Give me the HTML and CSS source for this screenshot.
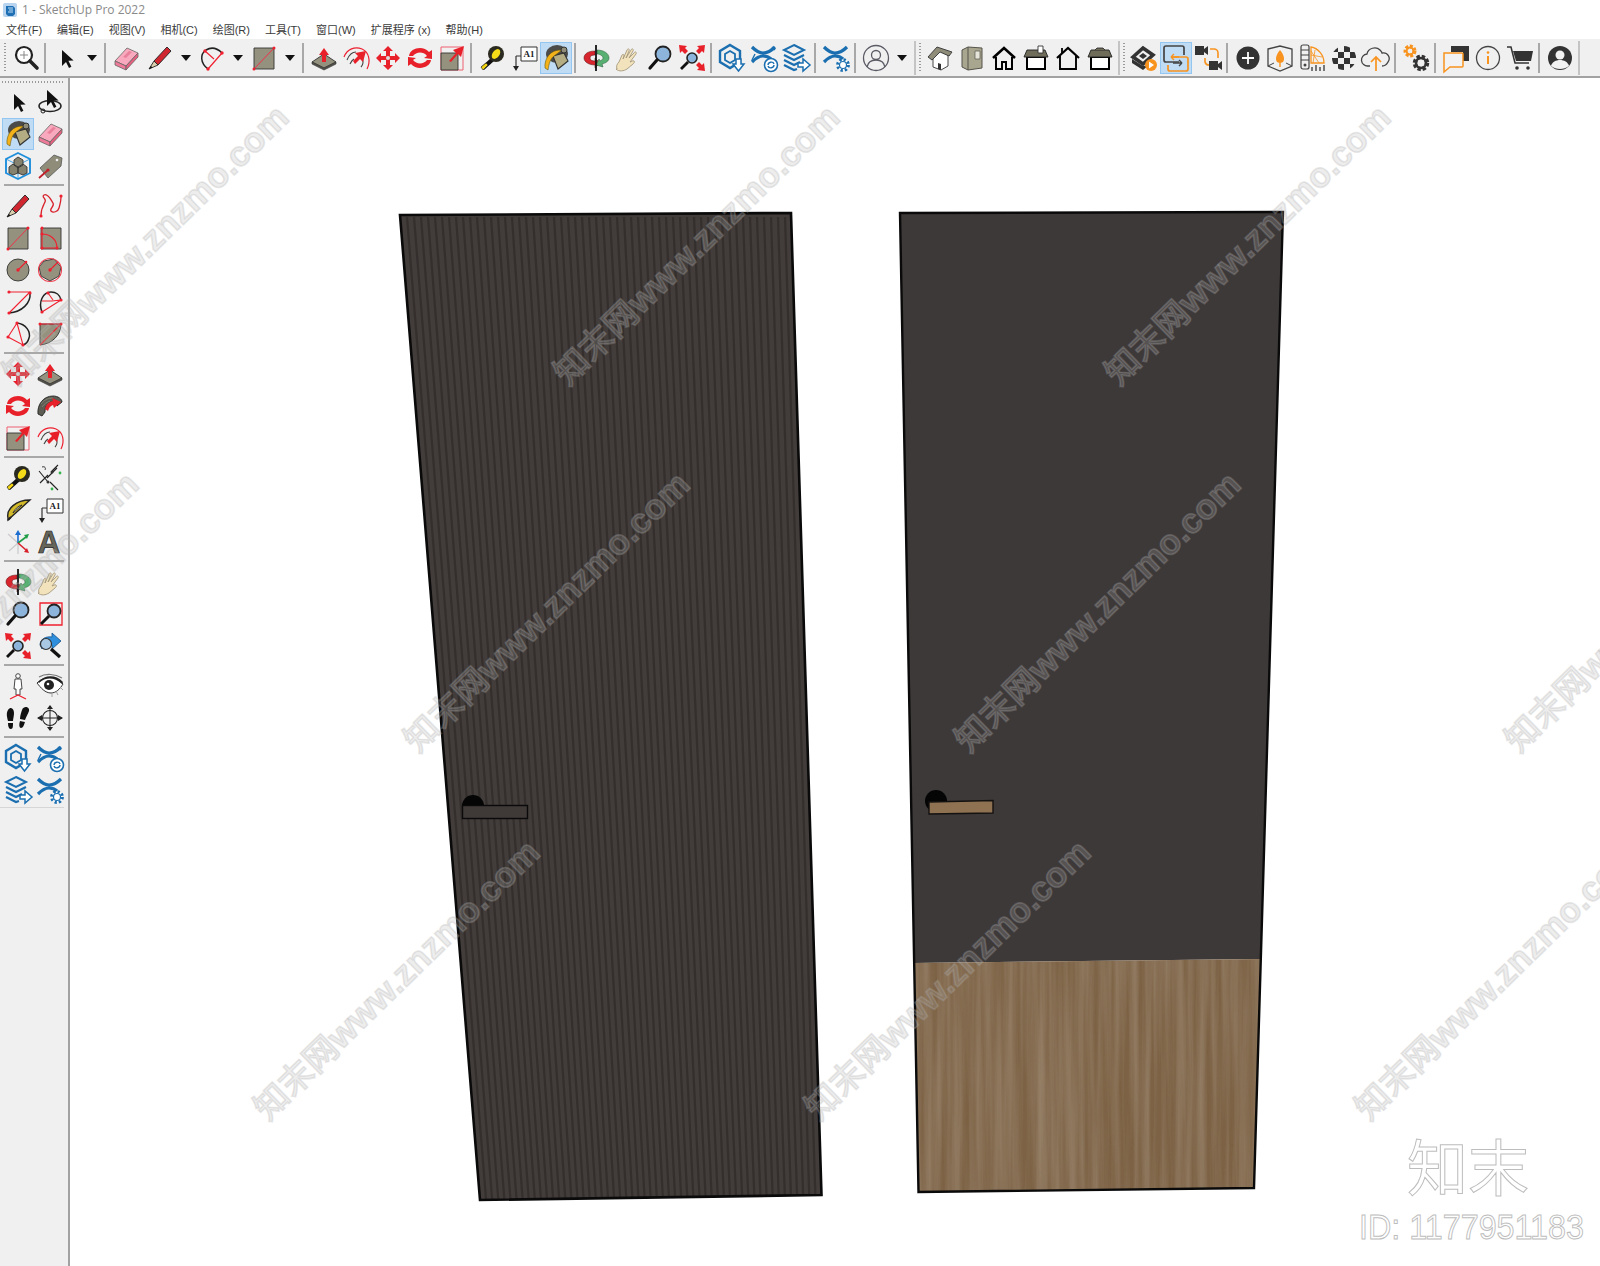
FILE: index.html
```html
<!DOCTYPE html>
<html lang="zh">
<head>
<meta charset="utf-8">
<title>1 - SketchUp Pro 2022</title>
<link rel="stylesheet" href="styles.css">
</head>
<body>
<svg class="sprite" aria-hidden="true">
<defs>
<symbol id="search" viewBox="0 0 32 32"><circle cx="14" cy="13" r="8" fill="#fff" stroke="#222" stroke-width="2.200"/><path d="M20 19l7 7" stroke="#222" stroke-width="3.600" stroke-linecap="round"/><path d="M14 9v8M10 13h8" stroke="#888"/></symbol>
<symbol id="select" viewBox="0 0 32 32"><path d="M12 8v16l4-4 3 6 2.400-1.200-3-6 5.200-.3z" fill="#111"/></symbol>
<symbol id="orbsel" viewBox="0 0 32 32"><ellipse cx="16" cy="20" rx="11" ry="5.500" fill="none" stroke="#222" stroke-width="1.500"/><circle cx="9" cy="25" r="2" fill="none" stroke="#222"/><path d="M13 4v16l4-4 3 6 2.400-1.200-3-6 5.200-.3z" fill="#111"/></symbol>
<symbol id="eraser" viewBox="0 0 32 32"><path d="M5 19L17 6l11 5-12 13z" fill="#f9a9bd" stroke="#666" stroke-width=".8"/><path d="M5 19l11 5v4L5 23z" fill="#ee7a98" stroke="#666" stroke-width=".8"/><path d="M16 24l12-13v4L16 28z" fill="#e5607f" stroke="#666" stroke-width=".8"/><path d="M13 15l6-6 3 1-6 6z" fill="#e8819b"/></symbol>
<symbol id="pencil" viewBox="0 0 32 32"><path d="M10 19L23 5l4 4-13 14z" fill="#cf2630" stroke="#222" stroke-width=".9"/><path d="M5 27l5-8 4 4z" fill="#d9cfae" stroke="#222" stroke-width=".9"/><path d="M5 27l2-3 1.500 1.500z" fill="#111"/></symbol>
<symbol id="arc3" viewBox="0 0 32 32"><path d="M12 27C4 21 4 12 10 8c5-3 11-2 16 3" fill="none" stroke="#222" stroke-width="1.500"/><path d="M9 9l9 8M26 11L12 27" stroke="#f02030" stroke-width="1.200" fill="none"/><g fill="#f02030"><circle cx="9" cy="9" r="1.700"/><circle cx="26" cy="11" r="1.700"/><circle cx="12" cy="27" r="1.700"/></g></symbol>
<symbol id="rect" viewBox="0 0 32 32"><path d="M6 6h20v21H6z" fill="#94927e" stroke="#333" stroke-width=".9"/><path d="M6 27L26 6" stroke="#f0304a" stroke-width="1"/><circle cx="6" cy="27" r="1.500" fill="#f02030"/><circle cx="26" cy="6" r="1.500" fill="#f02030"/></symbol>
<symbol id="rrect" viewBox="0 0 32 32"><path d="M7 6h20v21H7z" fill="#94927e" stroke="#333" stroke-width=".9"/><path d="M8 12c9 0 15 6 15 14M8 6v20h15" fill="none" stroke="#f02030" stroke-width="1.100"/><g fill="#f02030"><circle cx="8" cy="6" r="1.500"/><circle cx="8" cy="12" r="1.500"/><circle cx="8" cy="26" r="1.500"/><circle cx="23" cy="26" r="1.500"/></g></symbol>
<symbol id="circle" viewBox="0 0 32 32"><circle cx="16" cy="16" r="11" fill="#94927e" stroke="#333" stroke-width=".9"/><path d="M16 16l8-8" stroke="#f02030" stroke-width="1.100"/><circle cx="16" cy="16" r="1.700" fill="#f02030"/><circle cx="24" cy="8" r="1.300" fill="#f02030"/></symbol>
<symbol id="poly" viewBox="0 0 32 32"><path d="M10 7l10-2 7 8-2 9-9 5-9-5-2-9z" fill="#94927e" stroke="#333" stroke-width=".9"/><circle cx="16" cy="16" r="11.500" fill="none" stroke="#f04050" stroke-width="1.100"/><path d="M16 16l8-8" stroke="#f02030" stroke-width="1.100"/><circle cx="16" cy="16" r="1.700" fill="#f02030"/></symbol>
<symbol id="arc1" viewBox="0 0 32 32"><path d="M28 7c1 10-8 19-21 20" fill="none" stroke="#222" stroke-width="1.500"/><path d="M7 6h21L7 27" fill="none" stroke="#f02030" stroke-width="1.100"/><g fill="#f02030"><circle cx="7" cy="6" r="1.600"/><circle cx="28" cy="7" r="1.600"/><circle cx="7" cy="27" r="1.600"/></g></symbol>
<symbol id="arc2" viewBox="0 0 32 32"><path d="M8 26C4 16 9 6 17 6c5 0 9 3 10 8" fill="none" stroke="#222" stroke-width="1.500"/><path d="M8 15h10l9-1M14 7l5 7M8 26l19-12" stroke="#f02030" stroke-width="1.100" fill="none"/><g fill="#f02030"><circle cx="8" cy="26" r="1.600"/><circle cx="27" cy="14" r="1.600"/><circle cx="14" cy="7" r="1.600"/></g></symbol>
<symbol id="arcb" viewBox="0 0 32 32"><path d="M15 5c9 1 14 9 12 15-1 4-3 6-6 7" fill="none" stroke="#222" stroke-width="1.500"/><path d="M15 5l6 22L6 19z" fill="none" stroke="#f02030" stroke-width="1.100"/><g fill="#f02030"><circle cx="15" cy="5" r="1.600"/><circle cx="21" cy="27" r="1.600"/><circle cx="6" cy="19" r="1.600"/></g></symbol>
<symbol id="pie" viewBox="0 0 32 32"><path d="M6 6h21c0 11-9 20-21 21z" fill="#94927e" stroke="#333" stroke-width=".9"/><path d="M6 6h21L6 27" fill="none" stroke="#f02030" stroke-width="1.100"/><circle cx="6" cy="6" r="1.500" fill="#f02030"/><circle cx="27" cy="6" r="1.500" fill="#f02030"/></symbol>
<symbol id="push" viewBox="0 0 32 32"><path d="M4 20l12-8 12 8-12 6z" fill="#94927e" stroke="#333" stroke-width=".9"/><path d="M4 20v2l12 6 12-6v-2l-12 6z" fill="#55534a" stroke="#333" stroke-width=".6"/><path d="M16 6l5 7h-3v7h-4v-7h-3z" fill="#e8202a"/></symbol>
<symbol id="offset" viewBox="0 0 32 32"><path d="M4 15C7 7 15 4 22 7c7 3 9 12 5 20" fill="none" stroke="#ee2030" stroke-width="1.200"/><path d="M7 18c2-5 5-8 9-8M22 16c2 3 1 7-1 9M10 22c1-2 2-4 4-5" fill="none" stroke="#444" stroke-width="1.100"/><path d="M13 19l5-5-3-3 11-2-3 11-3-3-5 5z" fill="#e8202a"/></symbol>
<symbol id="move" viewBox="0 0 32 32"><path d="M16 4l5 5h-3v5h5v-3l5 5-5 5v-3h-5v5h3l-5 5-5-5h3v-5H9v3l-5-5 5-5v3h5V9h-3z" fill="#e8202a"/><circle cx="16" cy="16" r="2" fill="#ddd"/></symbol>
<symbol id="rotate" viewBox="0 0 32 32"><path d="M5 14C6 6 19 3 25 10l3-2v9l-8-1 3-2c-4-5-11-4-14 0z" fill="#e8202a"/><path d="M27 18c-1 8-14 11-20 4l-3 2v-9l8 1-3 2c4 5 11 4 14 0z" fill="#e8202a"/></symbol>
<symbol id="scale" viewBox="0 0 32 32"><path d="M5 5h22v23H5z" fill="none" stroke="#f06070" stroke-width="1"/><path d="M5 11h17v17H5z" fill="#94927e" stroke="#333" stroke-width=".9"/><path d="M13 19l7-8-3-3 11-4-3 11-3-3-7 8z" fill="#e8202a"/></symbol>
<symbol id="tape" viewBox="0 0 32 32"><path d="M5 25l10-9 3 3-10 9z" fill="#111"/><path d="M5 25l5-4 2 2-5 5z" fill="#f2d312" stroke="#222" stroke-width=".6"/><circle cx="20" cy="12" r="8" fill="#2a2a20"/><ellipse cx="20" cy="12" rx="3.500" ry="5.500" transform="rotate(35 20 12)" fill="#f4dc18"/></symbol>
<symbol id="text" viewBox="0 0 32 32"><path d="M13 5h16v14H13z" fill="#fff" stroke="#333"/><text x="21" y="15" class="sv-a1">A1</text><path d="M8 14v12" stroke="#333" stroke-width="1.200"/><path d="M5 24h6l-3 5z" fill="#222"/><path d="M8 14h5" stroke="#333"/></symbol>
<symbol id="paint" viewBox="0 0 32 32"><ellipse cx="17" cy="12" rx="11" ry="9" fill="#4b4b49"/><path d="M13 14l11-3 4 8-10 8z" fill="#b4ad84" stroke="#333" stroke-width="1.100"/><path d="M5 26C4 16 11 7 22 8l-8 6c-4 3-5 8-6 14z" fill="#f4b21a" stroke="#6a5a10" stroke-width=".6"/><circle cx="24" cy="8" r="3" fill="#8f8d7a" stroke="#333"/></symbol>
<symbol id="orbit" viewBox="0 0 32 32"><path d="M15 9C8 9 4 12 4 16c0 4 5 7 11 7v3l5-5-5-5v3c-3 0-5-1-5-3s2-3 5-3z" fill="#d8262e" stroke="#511" stroke-width=".5"/><path d="M17 8c6 0 12 3 12 8 0 3-3 5-7 6l1 3-7-2 3-6 1 2c2-1 3-2 3-3 0-2-3-4-6-4z" fill="#58b073" stroke="#253" stroke-width=".5"/><path d="M16 3v26" stroke="#111" stroke-width="1.800"/></symbol>
<symbol id="pan" viewBox="0 0 32 32"><path d="M5 27c-1-3 0-5 2-7l3-7c1-1 2-1 2 1l-1 3 4-9c1-2 3-1 2 1l-3 7 5-8c1-2 3-1 2 1l-4 7 5-5c1-2 3-1 2 1l-6 8c1 0 3-2 4-1s0 2-1 3l-6 5c-3 2-8 3-11 0z" fill="#f3e3bc" stroke="#a69a7d" stroke-width=".9"/></symbol>
<symbol id="zoom" viewBox="0 0 32 32"><circle cx="19" cy="12" r="7.500" fill="#8db5dc" stroke="#222" stroke-width="1.800"/><path d="M13 18L6 26" stroke="#111" stroke-width="3.200" stroke-linecap="round"/></symbol>
<symbol id="zwin" viewBox="0 0 32 32"><path d="M6 5h22v22H6z" fill="none" stroke="#ee1f2c" stroke-width="1.300"/><circle cx="20" cy="13" r="6.500" fill="#8db5dc" stroke="#222" stroke-width="1.800"/><path d="M15 18l-8 8" stroke="#111" stroke-width="3"/></symbol>
<symbol id="zext" viewBox="0 0 32 32"><circle cx="16" cy="16" r="5" fill="#8db5dc" stroke="#222" stroke-width="1.600"/><path d="M12 20l-7 7" stroke="#111" stroke-width="2.800"/><path d="M3 3l8 1-2 2 3 3-3 3-3-3-2 2zM29 3l-1 8-2-2-3 3-3-3 3-3-2-2zM29 29l-8-1 2-2-3-3 3-3 3 3 2-2z" fill="#e8202a"/></symbol>
<symbol id="prev" viewBox="0 0 32 32"><path d="M6 15c0-6 6-9 12-8V3l9 8-9 8v-4c-5-1-8 1-10 4z" fill="#2f8fdc" stroke="#15508a" stroke-width=".8"/><circle cx="12" cy="14" r="5.500" fill="#a9c8e4" stroke="#333" stroke-width="1.200"/><path d="M17 19l9 8" stroke="#111" stroke-width="3.200"/></symbol>
<symbol id="h-ext1" viewBox="0 0 32 32"><path d="M14 3l10 6v11l-10 6-10-6V9z" fill="none" stroke="#1b6fb0" stroke-width="2.400"/><path d="M14 9l5 3v6l-5 3-5-3v-6z" fill="none" stroke="#1b6fb0" stroke-width="1.800"/><path d="M20 17h5v5h3l-5.500 7-5.500-7h3z" fill="#fff" stroke="#1b6fb0" stroke-width="1.500"/></symbol>
<symbol id="h-ext2" viewBox="0 0 32 32"><path d="M4 5c4 4 8 6 11 6s8-2 12-6M4 20c4-4 8-6 11-6s6 1 8 3" fill="none" stroke="#1b6fb0" stroke-width="3.200"/><path d="M7 12l-3 6M24 5l3 3" stroke="#1b6fb0" stroke-width="1.400"/><circle cx="23" cy="23" r="6.500" fill="#fff" stroke="#1b6fb0" stroke-width="1.600"/><path d="M20 23c0-3 5-4 6-1M26 23c0 3-5 4-6 1" fill="none" stroke="#1b6fb0" stroke-width="1.400"/></symbol>
<symbol id="h-ext3" viewBox="0 0 32 32"><path d="M14 3l10 5-10 5-10-5z" fill="none" stroke="#1b6fb0" stroke-width="2"/><path d="M4 13l10 5 10-5M4 18l10 5 6-3M4 23l10 5 3-1" fill="none" stroke="#1b6fb0" stroke-width="2.200"/><path d="M18 21h5v-4l7 6-7 6v-4h-5z" fill="#fff" stroke="#1b6fb0" stroke-width="1.500"/></symbol>
<symbol id="h-ext4" viewBox="0 0 32 32"><path d="M4 5c4 4 8 6 11 6s8-2 12-6M4 20c4-4 8-6 11-6s6 1 8 3" fill="none" stroke="#1b6fb0" stroke-width="3.200"/><circle cx="23" cy="23" r="5.500" fill="#fff" stroke="#1b6fb0" stroke-width="2.800" stroke-dasharray="2.300 2"/><circle cx="23" cy="23" r="3.500" fill="#fff" stroke="#1b6fb0" stroke-width="1.200"/></symbol>
<symbol id="uline" viewBox="0 0 32 32"><circle cx="16" cy="16" r="12.500" fill="none" stroke="#5b5b66" stroke-width="1.300"/><circle cx="16" cy="13" r="4.500" fill="none" stroke="#5b5b66" stroke-width="1.300"/><path d="M7 25c1-5 5-7 9-7s8 2 9 7" fill="none" stroke="#5b5b66" stroke-width="1.300"/></symbol>
<symbol id="h1" viewBox="0 0 32 32"><path d="M9 15v10l8 3 7-4V13l-8-4z" fill="#fff" stroke="#333" stroke-width=".9"/><path d="M4 15L13 5l15 5-3 4-9-4-8 8z" fill="#8f8d7a" stroke="#333" stroke-width=".9"/><path d="M14 27v-6l3 1v6z" fill="#333"/></symbol>
<symbol id="h2" viewBox="0 0 32 32"><path d="M6 8l6-3 14 1v20l-14 2-6-3z" fill="#a9a690" stroke="#55534a"/><path d="M12 5v23" stroke="#55534a"/><path d="M19 9h5v8h-5z" fill="#e7e5da" stroke="#55534a" stroke-width=".7"/></symbol>
<symbol id="h3" viewBox="0 0 32 32"><path d="M5 16L16 6l11 10" fill="none" stroke="#000" stroke-width="2.600"/><path d="M8 15v12h6v-7h4v7h6V15" fill="none" stroke="#000" stroke-width="2"/></symbol>
<symbol id="h4" viewBox="0 0 32 32"><path d="M7 15h18v12H7z" fill="#fff" stroke="#000" stroke-width="2"/><path d="M4 15l3-7h18l3 7z" fill="#6f6c5a" stroke="#222" stroke-width=".9"/><path d="M18 4h5v7h-5z" fill="#fff" stroke="#333" stroke-width=".9"/></symbol>
<symbol id="h5" viewBox="0 0 32 32"><path d="M5 16L16 6l11 10" fill="none" stroke="#000" stroke-width="2.200"/><path d="M8 14v13h16V14" fill="none" stroke="#000" stroke-width="1.900"/><path d="M10 6v5" stroke="#000" stroke-width="1.800"/></symbol>
<symbol id="h6" viewBox="0 0 32 32"><path d="M7 15h18v12H7z" fill="#fff" stroke="#000" stroke-width="2"/><path d="M4 15l3-7h18l3 7z" fill="#6f6c5a" stroke="#222" stroke-width=".9"/><path d="M11 8l2-2h6l2 2" fill="#6f6c5a" stroke="#222" stroke-width=".8"/></symbol>
<symbol id="wplay" viewBox="0 0 32 32"><path d="M5 15L15 6l10 7-10 9z" fill="none" stroke="#333" stroke-width="3.600"/><path d="M4 17v4l11 7 6-5-6 1z" fill="#333"/><path d="M11 14l4-3 4 3-4 3z" fill="#333"/><circle cx="23" cy="23" r="6" fill="#f7931e"/><path d="M21 19.500l5 3.500-5 3.500z" fill="#fff"/></symbol>
<symbol id="sync" viewBox="0 0 32 32"><path d="M19 20H6a2 2 0 01-2-2V6a2 2 0 012-2h16a2 2 0 012 2v7" fill="none" stroke="#444" stroke-width="1.700"/><path d="M13 15h13a2 2 0 012 2v10a2 2 0 01-2 2H10a2 2 0 01-2-2v-4" fill="none" stroke="#f7931e" stroke-width="1.700"/><path d="M11 15h8M11 15l3-3M11 15l3 3" fill="none" stroke="#f7931e" stroke-width="1.400"/><path d="M13 21h9M22 21l-3-3M22 21l-3 3" fill="none" stroke="#444" stroke-width="1.400"/></symbol>
<symbol id="cams" viewBox="0 0 32 32"><path d="M3 4h9v9H3zM12 7l4-3v9l-4-3z" fill="#333"/><path d="M17 19h9v9h-9zM26 22l4-3v9l-4-3z" fill="#333"/><path d="M18 7h4a4 4 0 014 4v5M13 16v4a4 4 0 004 3" fill="none" stroke="#f7931e" stroke-width="1.600"/></symbol>
<symbol id="plus" viewBox="0 0 32 32"><circle cx="16" cy="16" r="11.500" fill="#333"/><path d="M16 10v12M10 16h12" stroke="#fff" stroke-width="1.800"/></symbol>
<symbol id="tree" viewBox="0 0 32 32"><path d="M4 7l12-3 12 3v17l-12 5-12-5z" fill="none" stroke="#444" stroke-width="1.300"/><path d="M4 24l6-3M28 24l-6-3" stroke="#444"/><path d="M16 8c4 5 5 9 3 12-1 1-5 1-6 0-2-3-1-7 3-12z" fill="#f7931e"/><path d="M16 20v5" stroke="#f7931e" stroke-width="1.400"/></symbol>
<symbol id="chart" viewBox="0 0 32 32"><rect x="5" y="3" width="8" height="24" rx="2" fill="none" stroke="#444" stroke-width="1.200"/><path d="M5 8h8M5 13h8M5 18h8" stroke="#444"/><circle cx="9" cy="23" r="1.500" fill="#444"/><path d="M15 5c7 1 13 8 13 16H15z" fill="none" stroke="#f7931e" stroke-width="1.300"/><path d="M15 13l11 2M15 9l8 12M19 8l-2 13" stroke="#f7931e" stroke-width=".8"/><path d="M16 29v-4M20 29v-6M24 29v-4M28 29v-6" stroke="#444" stroke-width="1.400"/></symbol>
<symbol id="check" viewBox="0 0 32 32"><defs><clipPath id="chk-clip"><circle cx="16" cy="16" r="12"/></clipPath></defs><g clip-path="url(#chk-clip)" fill="#333"><path d="M4 4h6v6H4zM16 4h6v6h-6zM10 10h6v6h-6zM22 10h6v6h-6zM4 16h6v6H4zM16 16h6v6h-6zM10 22h6v6h-6zM22 22h6v6h-6z"/></g></symbol>
<symbol id="cloud" viewBox="0 0 32 32"><path d="M10 24H8a6 6 0 01-1-12c1-6 9-8 13-4 1 1 2 2 2 3 6-1 9 5 6 9-1 2-3 4-6 4" fill="none" stroke="#444" stroke-width="1.300"/><path d="M16 29V16M11 20l5-5 5 5" fill="none" stroke="#f7931e" stroke-width="1.700"/></symbol>
<symbol id="gears" viewBox="0 0 32 32"><circle cx="10" cy="9" r="4.500" fill="none" stroke="#f7931e" stroke-width="4" stroke-dasharray="2.600 1.500"/><circle cx="10" cy="9" r="3.500" fill="none" stroke="#f7931e" stroke-width="2"/><circle cx="21" cy="21" r="6" fill="none" stroke="#333" stroke-width="4.500" stroke-dasharray="3 1.700"/><circle cx="21" cy="21" r="5" fill="none" stroke="#333" stroke-width="2.500"/></symbol>
<symbol id="chat" viewBox="0 0 32 32"><path d="M11 4h18v15h-6V10H11z" fill="#333"/><path d="M4 11h18a1 1 0 011 1v12a1 1 0 01-1 1H10l-6 5z" fill="#f2f2f2" stroke="#f7931e" stroke-width="1.500"/></symbol>
<symbol id="info" viewBox="0 0 32 32"><circle cx="16" cy="16" r="11.500" fill="none" stroke="#444" stroke-width="1.300"/><path d="M16 14v8" stroke="#f7931e" stroke-width="2"/><circle cx="16" cy="10.500" r="1.300" fill="#f7931e"/></symbol>
<symbol id="cart" viewBox="0 0 32 32"><path d="M3 5h4l4 16h14" fill="none" stroke="#333" stroke-width="1.500"/><path d="M9 9h20l-2 10H12z" fill="#333"/><circle cx="13" cy="26" r="1.800" fill="#333"/><circle cx="24" cy="26" r="1.800" fill="#333"/></symbol>
<symbol id="usolid" viewBox="0 0 32 32"><circle cx="16" cy="16" r="12" fill="#333"/><circle cx="16" cy="13" r="4.500" fill="#f2f2f2"/><path d="M7 24c1-4 5-6 9-6s8 2 9 6c-5 4-13 4-18 0z" fill="#f2f2f2"/></symbol>
<symbol id="comp" viewBox="0 0 32 32"><path d="M16 3l12 6v14l-12 6-12-6V9z" fill="none" stroke="#1f8fdc" stroke-width="1.900"/><path d="M4 9l12 6 12-6M16 15v14" stroke="#1f8fdc" stroke-width=".8" fill="none"/><path d="M12 10l4-3 5 3v5l-5 3-4-3zM7 17l4-3 5 3v6l-5 2-4-2zM16 17l5-3 4 3v6l-4 2-5-2z" fill="#85836f" stroke="#333" stroke-width=".9"/></symbol>
<symbol id="tag" viewBox="0 0 32 32"><path d="M6 18L20 5l8 3-1 8-13 12z" fill="#8f8d7a" stroke="#555" stroke-width=".8"/><circle cx="23" cy="10" r="1.300" fill="#eee"/><path d="M5 28l9-8" stroke="#c0202a" stroke-width="1.800"/><circle cx="14" cy="20" r="1.600" fill="#c0202a"/></symbol>
<symbol id="free" viewBox="0 0 32 32"><path d="M7 25c0-6 2-9 4-13 2-3-4-5-1-7 4-2 7 5 9 8s-4 6-2 8 7 1 8-3 2-6 2-11" fill="none" stroke="#d8202a" stroke-width="1.300"/><circle cx="7" cy="26" r="1.600" fill="#f02030"/><circle cx="27" cy="6" r="1.600" fill="#f02030"/></symbol>
<symbol id="follow" viewBox="0 0 32 32"><path d="M4 24c-1-9 5-18 15-18 5 0 9 3 9 6l-5 4c-1-3-3-5-6-4-4 1-6 5-6 10l-3 4z" fill="#5c5c52" stroke="#222" stroke-width=".9"/><path d="M7 14c3-4 7-6 12-6M8 17c2-3 5-5 8-6" fill="none" stroke="#8a8a7c" stroke-width=".8"/><path d="M11 19c1-4 3-7 8-8l-1-3 9 4-7 6-1-3c-3 1-4 3-5 6z" fill="#e8202a"/></symbol>
<symbol id="dim" viewBox="0 0 32 32"><path d="M5 9l9 11M6 21l8-8M18 9l6-6M13 16l10-10M16 20l8 8" stroke="#222" stroke-width="1.100" fill="none"/><path d="M8 5c3-1 4 1 3 3" fill="none" stroke="#222" stroke-width=".9"/><circle cx="14" cy="20" r="1.500" fill="#333"/><circle cx="18" cy="10" r="1.500" fill="#333"/><circle cx="26" cy="11" r="1.400" fill="#36b24a"/><circle cx="18" cy="27" r="1.400" fill="#36b24a"/></symbol>
<symbol id="proto" viewBox="0 0 32 32"><path d="M6 24C4 15 14 6 28 6L6 26z" fill="#d2b92a" stroke="#222" stroke-width="1.400"/><path d="M11 19c1-3 5-7 9-8z" fill="#f0f0f0" stroke="#222" stroke-width=".9"/><path d="M6 26l3-3" stroke="#222" stroke-width="2"/></symbol>
<symbol id="axes" viewBox="0 0 32 32"><path d="M16 17L6 8M16 17l-9 8M16 17v11" stroke="#ccc" stroke-width="1.300"/><path d="M16 17V6" stroke="#1c6fd0" stroke-width="1.600"/><path d="M16 4l-3 5h6z" fill="#1c6fd0"/><path d="M16 17l8-6" stroke="#1f9d45" stroke-width="1.600"/><path d="M27 8l-5 1 3 4z" fill="#1f9d45"/><path d="M16 17l8 7" stroke="#d8202a" stroke-width="1.600"/><path d="M27 27l-5-1 3-4z" fill="#d8202a"/></symbol>
<symbol id="t3d" viewBox="0 0 32 32"><text x="15" y="27" class="sv-a3">A</text></symbol>
<symbol id="walk" viewBox="0 0 32 32"><circle cx="16" cy="6" r="2.300" fill="#fff" stroke="#333" stroke-width=".9"/><path d="M13 9h6l1 10h-2v6h-4v-6h-2z" fill="#fff" stroke="#333" stroke-width=".9"/><path d="M8 29l8-4 8 4" fill="none" stroke="#ee2030" stroke-width="1.300"/></symbol>
<symbol id="eye" viewBox="0 0 32 32"><path d="M3 13c7-7 18-8 26 1-3 5-7 9-12 9-6 0-10-5-14-10z" fill="#fff" stroke="#333" stroke-width="1"/><path d="M4 12c7-7 17-8 25 0l-1 2C20 7 12 7 5 13z" fill="#222"/><path d="M5 7c7-4 16-3 23 1" fill="none" stroke="#777" stroke-width="1.200"/><circle cx="15" cy="15" r="5" fill="#222"/><circle cx="14" cy="14" r="1.300" fill="#fff"/><path d="M26 17l3 3M22 21l2 4M18 24v3" stroke="#999" stroke-width=".9"/></symbol>
<symbol id="foot" viewBox="0 0 32 32"><path d="M6 8c3-4 6-1 6 3 0 3-1 6-1 8H6c-1-4-2-8 0-11zM6 21h5c0 3 0 6-2 6s-3-2-3-6z" fill="#111"/><path d="M20 8c2-5 8-3 7 1-1 3-3 6-4 9l-5-1c0-3 1-6 2-9zM18 19l5 1c-1 3-2 6-4 6s-2-4-1-7z" fill="#111"/></symbol>
<symbol id="pos" viewBox="0 0 32 32"><circle cx="16" cy="16" r="7.500" fill="none" stroke="#222" stroke-width="1.100"/><path d="M4 16h24M16 4v24" stroke="#222" stroke-width="1"/><path d="M16 3l-3 4h6zM16 29l-3-4h6zM3 16l5-3v6zM29 16l-5-3v6z" fill="#222"/></symbol>
<symbol id="fav" viewBox="0 0 16 16"><rect x="1" y="1" width="14" height="14" rx="2" fill="#b8d4ee"/><path d="M4 4h7l2 2v6l-2 2H6l-2-2z" fill="#1f6fb5"/><path d="M6 6h5M11 8H7M6 10h5" stroke="#bfe0f6" fill="none"/></symbol>
</defs>
</svg>

<div class="app">
  <div class="titlebar"><svg class="fav"><use href="#fav"/></svg><span class="title">1 - SketchUp Pro 2022</span></div>
  <nav class="menu">
    <span>文件(F)</span><span>编辑(E)</span><span>视图(V)</span><span>相机(C)</span><span>绘图(R)</span><span>工具(T)</span><span>窗口(W)</span><span>扩展程序 (x)</span><span>帮助(H)</span>
  </nav>
  <div class="toolbar">
    <i class="grip first"></i>
    <svg class="ic"><use href="#search"/></svg><i class="sep"></i>
    <svg class="ic"><use href="#select"/></svg><i class="dd"></i><i class="sep"></i>
    <svg class="ic"><use href="#eraser"/></svg>
    <svg class="ic gap2"><use href="#pencil"/></svg><i class="dd"></i>
    <svg class="ic"><use href="#arc3"/></svg><i class="dd"></i>
    <svg class="ic"><use href="#rect"/></svg><i class="dd"></i><i class="sep"></i>
    <svg class="ic"><use href="#push"/></svg>
    <svg class="ic"><use href="#offset"/></svg>
    <svg class="ic"><use href="#move"/></svg>
    <svg class="ic"><use href="#rotate"/></svg>
    <svg class="ic"><use href="#scale"/></svg><i class="sep"></i>
    <svg class="ic"><use href="#tape"/></svg>
    <svg class="ic"><use href="#text"/></svg>
    <svg class="ic on"><use href="#paint"/></svg><i class="sep"></i>
    <svg class="ic"><use href="#orbit"/></svg>
    <svg class="ic"><use href="#pan"/></svg>
    <svg class="ic"><use href="#zoom"/></svg>
    <svg class="ic"><use href="#zext"/></svg><i class="sep"></i>
    <svg class="ic"><use href="#h-ext1"/></svg>
    <svg class="ic"><use href="#h-ext2"/></svg>
    <svg class="ic"><use href="#h-ext3"/></svg><i class="sep"></i>
    <svg class="ic"><use href="#h-ext4"/></svg><i class="sep"></i>
    <svg class="ic"><use href="#uline"/></svg><i class="dd"></i><i class="sep flat"></i><i class="grip"></i>
    <svg class="ic"><use href="#h1"/></svg>
    <svg class="ic"><use href="#h2"/></svg>
    <svg class="ic"><use href="#h3"/></svg>
    <svg class="ic"><use href="#h4"/></svg>
    <svg class="ic"><use href="#h5"/></svg>
    <svg class="ic"><use href="#h6"/></svg><i class="sep flat"></i><i class="grip"></i>
    <svg class="ic"><use href="#wplay"/></svg>
    <svg class="ic on"><use href="#sync"/></svg>
    <svg class="ic"><use href="#cams"/></svg><i class="sep"></i>
    <svg class="ic"><use href="#plus"/></svg>
    <svg class="ic"><use href="#tree"/></svg>
    <svg class="ic"><use href="#chart"/></svg>
    <svg class="ic"><use href="#check"/></svg>
    <svg class="ic"><use href="#cloud"/></svg><i class="sep"></i>
    <svg class="ic"><use href="#gears"/></svg><i class="sep"></i>
    <svg class="ic"><use href="#chat"/></svg>
    <svg class="ic"><use href="#info"/></svg>
    <svg class="ic"><use href="#cart"/></svg><i class="sep"></i>
    <svg class="ic"><use href="#usolid"/></svg><i class="sep flat"></i>
  </div>
  <div class="body">
    <aside class="side">
      <i class="hgrip"></i>
      <div class="grp">
        <svg class="ic"><use href="#select"/></svg><svg class="ic"><use href="#orbsel"/></svg>
        <svg class="ic on"><use href="#paint"/></svg><svg class="ic"><use href="#eraser"/></svg>
        <svg class="ic"><use href="#comp"/></svg><svg class="ic"><use href="#tag"/></svg>
      </div>
      <i class="hsep"></i>
      <div class="grp">
        <svg class="ic"><use href="#pencil"/></svg><svg class="ic"><use href="#free"/></svg>
        <svg class="ic"><use href="#rect"/></svg><svg class="ic"><use href="#rrect"/></svg>
        <svg class="ic"><use href="#circle"/></svg><svg class="ic"><use href="#poly"/></svg>
        <svg class="ic"><use href="#arc1"/></svg><svg class="ic"><use href="#arc2"/></svg>
        <svg class="ic"><use href="#arcb"/></svg><svg class="ic"><use href="#pie"/></svg>
      </div>
      <i class="hsep"></i>
      <div class="grp">
        <svg class="ic"><use href="#move"/></svg><svg class="ic"><use href="#push"/></svg>
        <svg class="ic"><use href="#rotate"/></svg><svg class="ic"><use href="#follow"/></svg>
        <svg class="ic"><use href="#scale"/></svg><svg class="ic"><use href="#offset"/></svg>
      </div>
      <i class="hsep"></i>
      <div class="grp">
        <svg class="ic"><use href="#tape"/></svg><svg class="ic"><use href="#dim"/></svg>
        <svg class="ic"><use href="#proto"/></svg><svg class="ic"><use href="#text"/></svg>
        <svg class="ic"><use href="#axes"/></svg><svg class="ic"><use href="#t3d"/></svg>
      </div>
      <i class="hsep"></i>
      <div class="grp">
        <svg class="ic"><use href="#orbit"/></svg><svg class="ic"><use href="#pan"/></svg>
        <svg class="ic"><use href="#zoom"/></svg><svg class="ic"><use href="#zwin"/></svg>
        <svg class="ic"><use href="#zext"/></svg><svg class="ic"><use href="#prev"/></svg>
      </div>
      <i class="hsep"></i>
      <div class="grp">
        <svg class="ic"><use href="#walk"/></svg><svg class="ic"><use href="#eye"/></svg>
        <svg class="ic"><use href="#foot"/></svg><svg class="ic"><use href="#pos"/></svg>
      </div>
      <i class="hsep"></i>
      <div class="grp">
        <svg class="ic"><use href="#h-ext1"/></svg><svg class="ic"><use href="#h-ext2"/></svg>
        <svg class="ic"><use href="#h-ext3"/></svg><svg class="ic"><use href="#h-ext4"/></svg>
      </div>
      <i class="hend"></i>
    </aside>
    <main class="canvas">
      <svg class="scene" viewBox="70 78 1530 1188" preserveAspectRatio="none">
        <defs>
          <clipPath id="door1-clip"><polygon points="400,215 791,213 821.500,1195 480,1200"/></clipPath>
          <filter id="wood" x="0" y="0" width="100%" height="100%">
            <feTurbulence type="fractalNoise" baseFrequency="0.13 0.004" numOctaves="4" seed="7"/>
            <feColorMatrix type="matrix" values="0 0 0 0 0.36  0 0 0 0 0.27  0 0 0 0 0.18  0.9 0 0 0 -0.22"/>
            <feComposite in2="SourceGraphic" operator="in" result="grain"/>
            <feMerge><feMergeNode in="SourceGraphic"/><feMergeNode in="grain"/></feMerge>
          </filter>
        </defs>
        <!-- ribbed door -->
        <polygon class="door-face" points="400,215 791,213 821.500,1195 480,1200"/>
        <path class="ribs" clip-path="url(#door1-clip)" d="M407 217L486.100 1200M414 217L492.200 1200M421 217L498.300 1200M428 217L504.400 1200M435 217L510.500 1200M442 217L516.600 1200M449 217L522.700 1200M456 217L528.800 1200M463 217L534.900 1200M470 217L541 1200M477 217L547.100 1200M484 217L553.200 1200M491 217L559.300 1200M498 217L565.400 1200M505 217L571.500 1200M512 217L577.600 1200M519 217L583.700 1200M526 217L589.800 1200M533 217L595.900 1200M540 217L602 1200M547 217L608.100 1200M554 217L614.200 1200M561 217L620.300 1200M568 217L626.400 1200M575 217L632.500 1200M582 217L638.600 1200M589 217L644.700 1200M596 217L650.800 1200M603 217L656.900 1200M610 217L663 1200M617 217L669.100 1200M624 217L675.200 1200M631 217L681.300 1200M638 217L687.400 1200M645 217L693.500 1200M652 217L699.600 1200M659 217L705.700 1200M666 217L711.800 1200M673 217L717.900 1200M680 217L724 1200M687 217L730.100 1200M694 217L736.200 1200M701 217L742.300 1200M708 217L748.400 1200M715 217L754.500 1200M722 217L760.600 1200M729 217L766.700 1200M736 217L772.800 1200M743 217L778.900 1200M750 217L785 1200M757 217L791.100 1200M764 217L797.200 1200M771 217L803.300 1200M778 217L809.400 1200M785 217L815.500 1200"/>
        <polygon class="door-edge" points="400,215 791,213 821.500,1195 480,1200"/>
        <circle class="knob" cx="473" cy="806" r="11"/>
        <rect class="handle-dark" x="462.500" y="805.500" width="65" height="13"/>
        <!-- plain door with wood kick panel -->
        <polygon class="door-plain" points="900,213 1283,212 1261,959 914,963"/>
        <polygon class="door-wood" points="914.500,963 1260.500,959 1254,1188 918.500,1192"/>
        <polygon class="door-edge thin" points="900,213 1283,212 1254,1188 918.500,1192"/>
        <circle class="knob" cx="936" cy="801" r="11"/>
        <polygon class="handle-wood" points="929,802 993,800.500 993,813 929,814"/>
      </svg>
    </main>
  </div>
</div>

<svg class="overlay" viewBox="0 0 1600 1266" aria-hidden="true">
  <defs>
    <text id="wm" class="wm" transform="rotate(-44.300)">知末网<tspan class="wm-latin">www.znzmo.com</tspan></text>
  </defs>
  <use href="#wm" transform="translate(17 387)"/>
  <use href="#wm" transform="translate(568 387)"/>
  <use href="#wm" transform="translate(1119 387)"/>
  <use href="#wm" transform="translate(-133 754)"/>
  <use href="#wm" transform="translate(418 754)"/>
  <use href="#wm" transform="translate(969 754)"/>
  <use href="#wm" transform="translate(1519 754)"/>
  <use href="#wm" transform="translate(268 1122)"/>
  <use href="#wm" transform="translate(819 1122)"/>
  <use href="#wm" transform="translate(1369 1122)"/>
  <text class="brand" x="1407" y="1191">知末</text>
  <text class="brand-id" transform="translate(1359 1239) scale(1 1.100)">ID: 1177951183</text>
</svg>
</body>
</html>
```

FILE: styles.css
```css
* { box-sizing: border-box; }
html, body { margin: 0; padding: 0; }
body {
  width: 1600px;
  height: 1266px;
  overflow: hidden;
  position: relative;
  background: #fff;
  font-family: "Noto Sans CJK SC", "Liberation Sans", sans-serif;
}
.sprite { position: absolute; width: 0; height: 0; }
.sv-a1 { font: bold 9px "Liberation Serif", serif; text-anchor: middle; fill: #222; }
.sv-a3 { font: bold 31px "Liberation Sans", sans-serif; text-anchor: middle; fill: #66655a; stroke: #222; stroke-width: .7px; }

.app { display: flex; flex-direction: column; height: 100%; }

.titlebar { height: 20px; display: flex; align-items: center; padding-left: 2px; background: #fff; }
.fav { width: 16px; height: 16px; flex: none; }
.title { margin-left: 4px; font: 12px/20px "Open Sans", sans-serif; color: #8a8a8a; }

.menu { height: 19px; display: flex; gap: 15px; padding-left: 6px; padding-top: 2px; align-items: center; background: #fff; font-family: "Liberation Sans", "Noto Sans CJK SC", sans-serif; font-size: 11px; line-height: 17px; color: #3a3a3a; }

.toolbar { height: 39px; flex: none; display: flex; align-items: center; padding-top: 1px; background: #f0f0f0; border-bottom: 2px solid #a2a2a2; }
.ic { width: 32px; height: 32px; flex: none; display: block; }
.ic.on { background: #bfdcf4; outline: 1px solid #93c6f0; outline-offset: -1px; }
.gap2 { margin-left: 2px; }
.sep { width: 2px; height: 30px; flex: none; margin: 0 4px 0 2px; background: #a8a8a8; }
.sep.flat { margin-right: 0; height: 34px; background: #c4c4c4; }
.grip { width: 2px; height: 30px; flex: none; margin: 0 3px; background: repeating-linear-gradient(#9a9a9a 0 1px, transparent 1px 3px); }
.grip.first { margin: 0 4px 0 4px; }
.dd { width: 20px; height: 32px; flex: none; display: flex; align-items: center; justify-content: center; }
.dd::after { content: ""; border-left: 5.500px solid transparent; border-right: 5.500px solid transparent; border-top: 6px solid #111; }

.body { flex: 1; display: flex; min-height: 0; }
.side { width: 70px; flex: none; padding-left: 2px; background: #f0f0f0; border-right: 2px solid #a2a2a2; }
.hgrip { display: block; height: 2px; width: 62px; margin: 3px 0 3px; background: repeating-linear-gradient(90deg, #9a9a9a 0 1px, transparent 1px 3px); }
.grp { display: grid; grid-template-columns: 32px 32px; grid-auto-rows: 32px; }
.hsep { display: block; width: 60px; height: 2px; margin: 2px 0 4px 2px; background: #a8a8a8; }
.hend { display: block; width: 64px; height: 1px; margin: 1px 0 0 -2px; background: #d6d6d6; }

.canvas { flex: 1; min-width: 0; background: #fff; }
.scene { display: block; width: 100%; height: 100%; }
.door-face { fill: #423c3a; }
.ribs { fill: none; stroke: #2c2827; stroke-width: 2.200; stroke-opacity: .65; }
.door-edge { fill: none; stroke: #0a0a0a; stroke-width: 2.600; stroke-linejoin: miter; }
.door-edge.thin { stroke-width: 2.400; }
.door-plain { fill: #3e3939; }
.door-wood { fill: #7d6245; filter: url(#wood); }
.knob { fill: #050505; }
.handle-dark { fill: #3f3937; stroke: #0a0a0a; stroke-width: 1.400; }
.handle-wood { fill: #8f7252; stroke: #141210; stroke-width: 1.400; }

.overlay { position: absolute; left: 0; top: 0; width: 1600px; height: 1266px; pointer-events: none; }
.wm { font: 500 34px "Noto Sans CJK SC", sans-serif; fill: rgb(175,175,175); fill-opacity: .22; stroke: rgb(175,175,175); stroke-opacity: .3; stroke-width: 1.600px; }
.wm-latin { font: bold 35px "Liberation Sans", sans-serif; }
.brand { font: 400 61px "Noto Sans CJK SC", sans-serif; fill: #fff; stroke: #bdbdbd; stroke-width: 1px; }
.brand-id { font: 400 32.300px "Liberation Sans", sans-serif; fill: #fff; stroke: #bdbdbd; stroke-width: .9px; }
```
